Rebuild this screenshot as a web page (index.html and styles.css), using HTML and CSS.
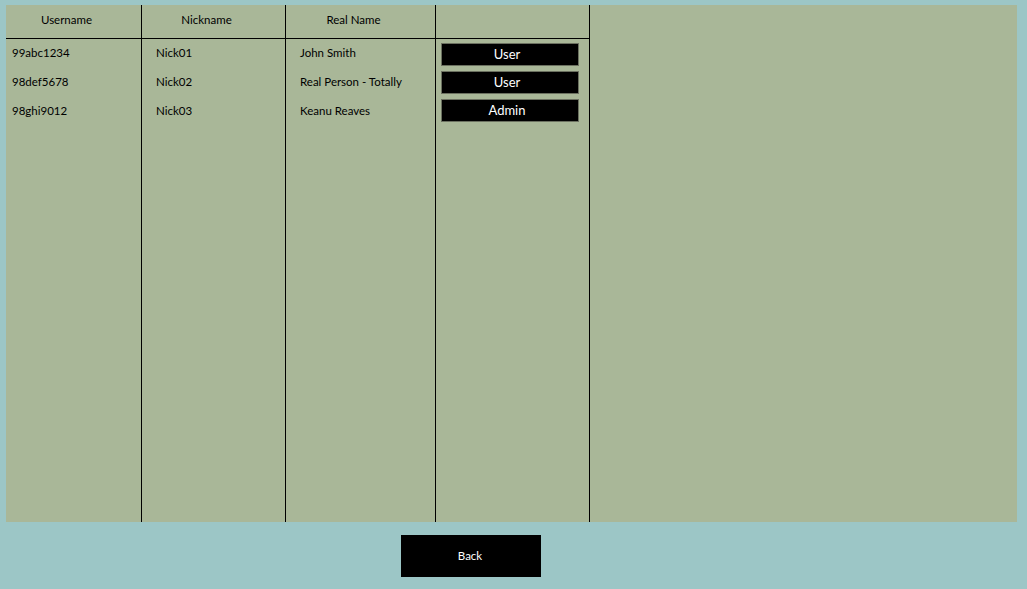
FILE: index.html
```html
<!DOCTYPE html>
<html>
<head>
<meta charset="utf-8">
<link rel="stylesheet" href="styles.css">
</head>
<body>
<div class="page">
  <div class="panel">
    <div class="table">
      <div class="col c1">
        <div class="head">Username</div>
        <div class="rows">
          <div class="cell">99abc1234</div>
          <div class="cell">98def5678</div>
          <div class="cell">98ghi9012</div>
        </div>
      </div>
      <div class="col c2">
        <div class="head">Nickname</div>
        <div class="rows">
          <div class="cell">Nick01</div>
          <div class="cell">Nick02</div>
          <div class="cell">Nick03</div>
        </div>
      </div>
      <div class="col c3">
        <div class="head">Real Name</div>
        <div class="rows">
          <div class="cell">John Smith</div>
          <div class="cell">Real Person - Totally</div>
          <div class="cell">Keanu Reaves</div>
        </div>
      </div>
      <div class="col c4">
        <div class="head"></div>
        <div class="rows btn-rows">
          <div class="cell"><button class="role">User</button></div>
          <div class="cell"><button class="role">User</button></div>
          <div class="cell"><button class="role">Admin</button></div>
        </div>
      </div>
    </div>
  </div>
  <div class="footer">
    <button class="back">Back</button>
  </div>
</div>
</body>
</html>
```

FILE: styles.css
```css
html, body {
  margin: 0;
  padding: 0;
  background: #9cc6c6;
}
body {
  font-family: Lato, "Open Sans", sans-serif;
  color: #000;
}
.page {
  width: 1027px;
  height: 589px;
  padding: 5px 10px 0 6px;
  box-sizing: border-box;
  display: flex;
  flex-direction: column;
}
.panel {
  height: 517px;
  background: #a9b798;
  display: flex;
}
.table {
  display: flex;
  height: 100%;
}
.col {
  border-right: 1px solid #000;
  display: flex;
  flex-direction: column;
}
.c1 { width: 135px; }
.c2 { width: 143px; }
.c3 { width: 149px; }
.c4 { width: 153px; }
.head {
  height: 34px;
  border-bottom: 1px solid #000;
  display: flex;
  align-items: center;
  justify-content: center;
  font-size: 11.5px;
  padding: 0 14px 5px 0;
  box-sizing: border-box;
}
.cell {
  height: 29px;
  display: flex;
  align-items: center;
  font-size: 11.5px;
  padding-left: 14px;
  padding-bottom: 2px;
  box-sizing: border-box;
}
.c1 .cell { padding-left: 6px; }
.btn-rows { padding-top: 1px; }
.btn-rows .cell {
  height: 28px;
  padding-left: 5px;
  padding-bottom: 0;
}
.role {
  width: 138px;
  height: 23px;
  background: #000;
  color: #fff;
  border: 1px solid #6b7060;
  font-family: Lato, "Open Sans", sans-serif;
  font-size: 13px;
  padding: 0 6px 1px 0;
  margin: 0;
}
.footer {
  padding-left: 395px;
  padding-top: 13px;
}
.back {
  width: 140px;
  height: 42px;
  background: #000;
  color: #fff;
  border: none;
  font-family: Lato, "Open Sans", sans-serif;
  font-size: 11.5px;
  padding: 0 2px 2px 0;
  margin: 0;
}
```
